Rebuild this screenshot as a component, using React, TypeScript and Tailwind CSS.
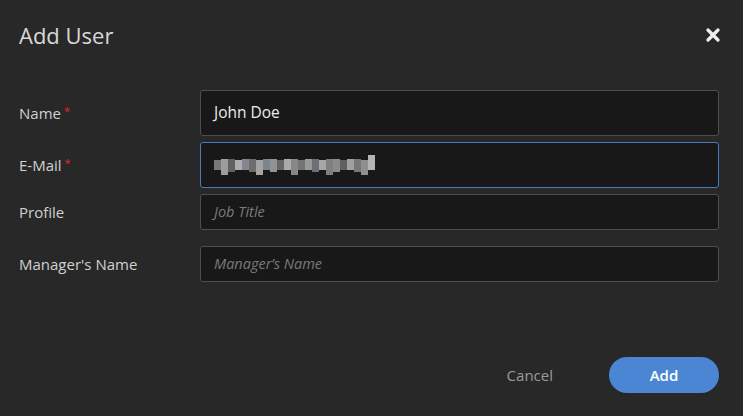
import { X } from "lucide-react";

const mosaic = [
  "#8a8a8a", "#b5b5b5", "#6f6f6f", "#c9c9c9", "#9a9aa8", "#7d7d7d", "#bdbdbd", "#8e9aa3",
  "#a8a8a8", "#737373", "#c4c4c4", "#9b9b9b", "#858585", "#b0b0b0", "#7a8088", "#c0c0c0",
  "#929292", "#a0a0a0", "#6d6d6d", "#bababa", "#888888", "#a5a5a5", "#d0d0d0",
];

function Field({
  label,
  required,
  tall,
  focused,
  children,
}: {
  label: string;
  required?: boolean;
  tall?: boolean;
  focused?: boolean;
  children: React.ReactNode;
}) {
  return (
    <div className="flex items-center">
      <div className="w-[181px] shrink-0 text-[15px] text-[#d0d0d0]">
        {label}
        {required && <span className="relative -top-[4px] ml-[3px] text-[11px] text-[#e0263a]">*</span>}
      </div>
      <div
        className={`flex flex-1 items-center rounded-[3px] border bg-[#181818] px-[13px] ${
          tall ? "h-[46px]" : "h-[36px]"
        } ${focused ? "border-[#4a7ab8]" : "border-[#4e4e4e]"}`}
      >
        {children}
      </div>
    </div>
  );
}

export default function App() {
  return (
    <div
      className="flex h-[416px] w-[743px] flex-col bg-[#282828] px-[19px] text-[#e6e6e6]"
      style={{ fontFamily: '"Open Sans", "Noto Sans", sans-serif' }}
    >
      <div className="flex h-[70px] items-center justify-between">
        <h2 className="text-[22px] text-[#d8d8d8]">Add User</h2>
        <X className="mr-[1px] h-[20px] w-[20px] text-[#eeeeee]" strokeWidth={4} />
      </div>

      <div className="mt-[20px] flex flex-col gap-[6px] pr-[5px]">
        <Field label="Name" required tall>
          <span className="text-[15.5px] text-[#ececec]">John Doe</span>
        </Field>
        <Field label="E-Mail" required tall focused>
          <div className="flex h-[20px] items-stretch">
            {mosaic.map((c, i) => (
              <div
                key={i}
                className="w-[7px]"
                style={{
                  backgroundColor: c,
                  marginTop: i === 22 ? 0 : i % 3 === 0 ? 5 : 4,
                  marginBottom: i % 5 === 1 ? 0 : i % 3 === 2 ? 3 : 5,
                  opacity: 0.85,
                }}
              />
            ))}
          </div>
        </Field>
        <Field label="Profile">
          <span className="text-[14.5px] italic text-[#7a7a7a]">Job Title</span>
        </Field>
        <div className="h-[4px]" />
        <Field label="Manager's Name">
          <span className="text-[14.5px] italic text-[#7a7a7a]">Manager’s Name</span>
        </Field>
      </div>

      <div className="mt-auto mb-[23px] flex items-center justify-end gap-[56px] pr-[5px]">
        <button type="button" className="text-[15px] text-[#9a9a9a]">
          Cancel
        </button>
        <button
          type="button"
          className="h-[36px] w-[110px] rounded-full bg-[#4a86d3] text-[15px] font-semibold text-white"
        >
          Add
        </button>
      </div>
    </div>
  );
}
